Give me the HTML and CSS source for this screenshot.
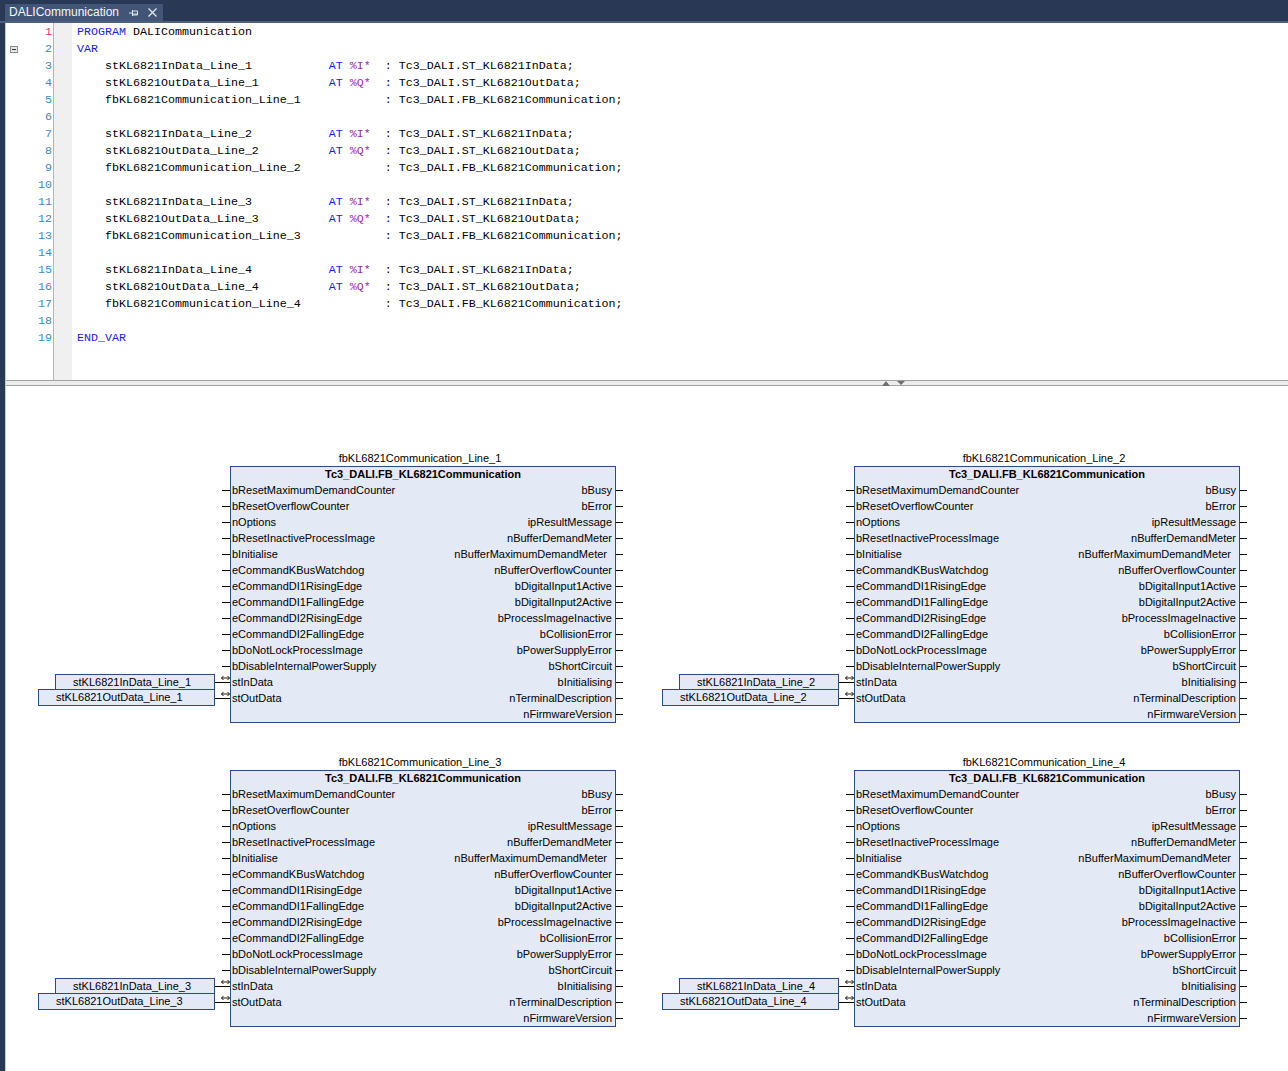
FILE: index.html
```html
<!DOCTYPE html>
<html>
<head>
<meta charset="utf-8">
<link rel="stylesheet" href="styles.css">
</head>
<body>
<div class="tabbar">
  <div class="tab">
    <span class="tabname">DALICommunication</span>
    <svg class="pin" width="9" height="8" viewBox="0 0 9 8"><path d="M0 4H3M3.5 1V7M3.5 2H8.5V6H3.5M3.5 5H8.5" fill="none" stroke="#dfe5ef" stroke-width="1"/></svg>
    <svg class="close" width="9" height="9" viewBox="0 0 9 9"><path d="M0.5 0.5L8.5 8.5M8.5 0.5L0.5 8.5" stroke="#dfe5ef" stroke-width="1.3"/></svg>
  </div>
</div>
<div class="tabline"></div>
<div class="main">
  <div class="editor">
    <div class="gutter">
      <div class="ln cur"><span class="fold"></span><span class="num">1</span></div>
      <div class="ln"><span class="fold"><span class="foldbox"></span></span><span class="num">2</span></div>
      <div class="ln"><span class="fold"></span><span class="num">3</span></div>
      <div class="ln"><span class="fold"></span><span class="num">4</span></div>
      <div class="ln"><span class="fold"></span><span class="num">5</span></div>
      <div class="ln"><span class="fold"></span><span class="num">6</span></div>
      <div class="ln"><span class="fold"></span><span class="num">7</span></div>
      <div class="ln"><span class="fold"></span><span class="num">8</span></div>
      <div class="ln"><span class="fold"></span><span class="num">9</span></div>
      <div class="ln"><span class="fold"></span><span class="num">10</span></div>
      <div class="ln"><span class="fold"></span><span class="num">11</span></div>
      <div class="ln"><span class="fold"></span><span class="num">12</span></div>
      <div class="ln"><span class="fold"></span><span class="num">13</span></div>
      <div class="ln"><span class="fold"></span><span class="num">14</span></div>
      <div class="ln"><span class="fold"></span><span class="num">15</span></div>
      <div class="ln"><span class="fold"></span><span class="num">16</span></div>
      <div class="ln"><span class="fold"></span><span class="num">17</span></div>
      <div class="ln"><span class="fold"></span><span class="num">18</span></div>
      <div class="ln"><span class="fold"></span><span class="num">19</span></div>
    </div>
    <div class="margin"></div>
    <div class="code">
      <div class="cl"><span class="kw">PROGRAM</span> DALICommunication</div>
      <div class="cl"><span class="kw">VAR</span></div>
      <div class="cl"><span>    stKL6821InData_Line_1           </span><span class="kw">AT</span> <span class="addr">%I*</span><span>  : Tc3_DALI.ST_KL6821InData;</span></div>
      <div class="cl"><span>    stKL6821OutData_Line_1          </span><span class="kw">AT</span> <span class="addr">%Q*</span><span>  : Tc3_DALI.ST_KL6821OutData;</span></div>
      <div class="cl">    fbKL6821Communication_Line_1            : Tc3_DALI.FB_KL6821Communication;</div>
      <div class="cl"> </div>
      <div class="cl"><span>    stKL6821InData_Line_2           </span><span class="kw">AT</span> <span class="addr">%I*</span><span>  : Tc3_DALI.ST_KL6821InData;</span></div>
      <div class="cl"><span>    stKL6821OutData_Line_2          </span><span class="kw">AT</span> <span class="addr">%Q*</span><span>  : Tc3_DALI.ST_KL6821OutData;</span></div>
      <div class="cl">    fbKL6821Communication_Line_2            : Tc3_DALI.FB_KL6821Communication;</div>
      <div class="cl"> </div>
      <div class="cl"><span>    stKL6821InData_Line_3           </span><span class="kw">AT</span> <span class="addr">%I*</span><span>  : Tc3_DALI.ST_KL6821InData;</span></div>
      <div class="cl"><span>    stKL6821OutData_Line_3          </span><span class="kw">AT</span> <span class="addr">%Q*</span><span>  : Tc3_DALI.ST_KL6821OutData;</span></div>
      <div class="cl">    fbKL6821Communication_Line_3            : Tc3_DALI.FB_KL6821Communication;</div>
      <div class="cl"> </div>
      <div class="cl"><span>    stKL6821InData_Line_4           </span><span class="kw">AT</span> <span class="addr">%I*</span><span>  : Tc3_DALI.ST_KL6821InData;</span></div>
      <div class="cl"><span>    stKL6821OutData_Line_4          </span><span class="kw">AT</span> <span class="addr">%Q*</span><span>  : Tc3_DALI.ST_KL6821OutData;</span></div>
      <div class="cl">    fbKL6821Communication_Line_4            : Tc3_DALI.FB_KL6821Communication;</div>
      <div class="cl"> </div>
      <div class="cl"><span class="kw">END_VAR</span></div>
    </div>
  </div>
  <div class="splitter"><span class="tri-up"></span><span class="tri-down"></span></div>
  <div class="fbd">

    <div class="net">
      <div class="ext">
        <div class="var vin">stKL6821InData_Line_1</div>
        <div class="var vout">stKL6821OutData_Line_1</div>
      </div>
      <div class="wires">
        <div class="pins-in"></div>
        <div class="link"><svg width="9" height="6" viewBox="0 0 9 6"><path d="M0.5 3H8.5M0.5 3L2.5 1M0.5 3L2.5 5M8.5 3L6.5 1M8.5 3L6.5 5" fill="none" stroke="#000" stroke-width="0.9"/></svg></div>
        <div class="link"><svg width="9" height="6" viewBox="0 0 9 6"><path d="M0.5 3H8.5M0.5 3L2.5 1M0.5 3L2.5 5M8.5 3L6.5 1M8.5 3L6.5 5" fill="none" stroke="#000" stroke-width="0.9"/></svg></div>
      </div>
      <div class="fb">
        <div class="inst">fbKL6821Communication_Line_1</div>
        <div class="box">
          <div class="title">Tc3_DALI.FB_KL6821Communication</div>
          <div class="row"><span>bResetMaximumDemandCounter</span><span>bBusy</span></div>
          <div class="row"><span>bResetOverflowCounter</span><span>bError</span></div>
          <div class="row"><span>nOptions</span><span>ipResultMessage</span></div>
          <div class="row"><span>bResetInactiveProcessImage</span><span>nBufferDemandMeter</span></div>
          <div class="row"><span>bInitialise</span><span class="gap">nBufferMaximumDemandMeter</span></div>
          <div class="row"><span>eCommandKBusWatchdog</span><span>nBufferOverflowCounter</span></div>
          <div class="row"><span>eCommandDI1RisingEdge</span><span>bDigitalInput1Active</span></div>
          <div class="row"><span>eCommandDI1FallingEdge</span><span>bDigitalInput2Active</span></div>
          <div class="row"><span>eCommandDI2RisingEdge</span><span>bProcessImageInactive</span></div>
          <div class="row"><span>eCommandDI2FallingEdge</span><span>bCollisionError</span></div>
          <div class="row"><span>bDoNotLockProcessImage</span><span>bPowerSupplyError</span></div>
          <div class="row"><span>bDisableInternalPowerSupply</span><span>bShortCircuit</span></div>
          <div class="row"><span>stInData</span><span>bInitialising</span></div>
          <div class="row"><span>stOutData</span><span>nTerminalDescription</span></div>
          <div class="row"><span></span><span>nFirmwareVersion</span></div>
        </div>
      </div>
      <div class="pins-out"></div>
    </div>

    <div class="net">
      <div class="ext">
        <div class="var vin">stKL6821InData_Line_2</div>
        <div class="var vout">stKL6821OutData_Line_2</div>
      </div>
      <div class="wires">
        <div class="pins-in"></div>
        <div class="link"><svg width="9" height="6" viewBox="0 0 9 6"><path d="M0.5 3H8.5M0.5 3L2.5 1M0.5 3L2.5 5M8.5 3L6.5 1M8.5 3L6.5 5" fill="none" stroke="#000" stroke-width="0.9"/></svg></div>
        <div class="link"><svg width="9" height="6" viewBox="0 0 9 6"><path d="M0.5 3H8.5M0.5 3L2.5 1M0.5 3L2.5 5M8.5 3L6.5 1M8.5 3L6.5 5" fill="none" stroke="#000" stroke-width="0.9"/></svg></div>
      </div>
      <div class="fb">
        <div class="inst">fbKL6821Communication_Line_2</div>
        <div class="box">
          <div class="title">Tc3_DALI.FB_KL6821Communication</div>
          <div class="row"><span>bResetMaximumDemandCounter</span><span>bBusy</span></div>
          <div class="row"><span>bResetOverflowCounter</span><span>bError</span></div>
          <div class="row"><span>nOptions</span><span>ipResultMessage</span></div>
          <div class="row"><span>bResetInactiveProcessImage</span><span>nBufferDemandMeter</span></div>
          <div class="row"><span>bInitialise</span><span class="gap">nBufferMaximumDemandMeter</span></div>
          <div class="row"><span>eCommandKBusWatchdog</span><span>nBufferOverflowCounter</span></div>
          <div class="row"><span>eCommandDI1RisingEdge</span><span>bDigitalInput1Active</span></div>
          <div class="row"><span>eCommandDI1FallingEdge</span><span>bDigitalInput2Active</span></div>
          <div class="row"><span>eCommandDI2RisingEdge</span><span>bProcessImageInactive</span></div>
          <div class="row"><span>eCommandDI2FallingEdge</span><span>bCollisionError</span></div>
          <div class="row"><span>bDoNotLockProcessImage</span><span>bPowerSupplyError</span></div>
          <div class="row"><span>bDisableInternalPowerSupply</span><span>bShortCircuit</span></div>
          <div class="row"><span>stInData</span><span>bInitialising</span></div>
          <div class="row"><span>stOutData</span><span>nTerminalDescription</span></div>
          <div class="row"><span></span><span>nFirmwareVersion</span></div>
        </div>
      </div>
      <div class="pins-out"></div>
    </div>

    <div class="net">
      <div class="ext">
        <div class="var vin">stKL6821InData_Line_3</div>
        <div class="var vout">stKL6821OutData_Line_3</div>
      </div>
      <div class="wires">
        <div class="pins-in"></div>
        <div class="link"><svg width="9" height="6" viewBox="0 0 9 6"><path d="M0.5 3H8.5M0.5 3L2.5 1M0.5 3L2.5 5M8.5 3L6.5 1M8.5 3L6.5 5" fill="none" stroke="#000" stroke-width="0.9"/></svg></div>
        <div class="link"><svg width="9" height="6" viewBox="0 0 9 6"><path d="M0.5 3H8.5M0.5 3L2.5 1M0.5 3L2.5 5M8.5 3L6.5 1M8.5 3L6.5 5" fill="none" stroke="#000" stroke-width="0.9"/></svg></div>
      </div>
      <div class="fb">
        <div class="inst">fbKL6821Communication_Line_3</div>
        <div class="box">
          <div class="title">Tc3_DALI.FB_KL6821Communication</div>
          <div class="row"><span>bResetMaximumDemandCounter</span><span>bBusy</span></div>
          <div class="row"><span>bResetOverflowCounter</span><span>bError</span></div>
          <div class="row"><span>nOptions</span><span>ipResultMessage</span></div>
          <div class="row"><span>bResetInactiveProcessImage</span><span>nBufferDemandMeter</span></div>
          <div class="row"><span>bInitialise</span><span class="gap">nBufferMaximumDemandMeter</span></div>
          <div class="row"><span>eCommandKBusWatchdog</span><span>nBufferOverflowCounter</span></div>
          <div class="row"><span>eCommandDI1RisingEdge</span><span>bDigitalInput1Active</span></div>
          <div class="row"><span>eCommandDI1FallingEdge</span><span>bDigitalInput2Active</span></div>
          <div class="row"><span>eCommandDI2RisingEdge</span><span>bProcessImageInactive</span></div>
          <div class="row"><span>eCommandDI2FallingEdge</span><span>bCollisionError</span></div>
          <div class="row"><span>bDoNotLockProcessImage</span><span>bPowerSupplyError</span></div>
          <div class="row"><span>bDisableInternalPowerSupply</span><span>bShortCircuit</span></div>
          <div class="row"><span>stInData</span><span>bInitialising</span></div>
          <div class="row"><span>stOutData</span><span>nTerminalDescription</span></div>
          <div class="row"><span></span><span>nFirmwareVersion</span></div>
        </div>
      </div>
      <div class="pins-out"></div>
    </div>

    <div class="net">
      <div class="ext">
        <div class="var vin">stKL6821InData_Line_4</div>
        <div class="var vout">stKL6821OutData_Line_4</div>
      </div>
      <div class="wires">
        <div class="pins-in"></div>
        <div class="link"><svg width="9" height="6" viewBox="0 0 9 6"><path d="M0.5 3H8.5M0.5 3L2.5 1M0.5 3L2.5 5M8.5 3L6.5 1M8.5 3L6.5 5" fill="none" stroke="#000" stroke-width="0.9"/></svg></div>
        <div class="link"><svg width="9" height="6" viewBox="0 0 9 6"><path d="M0.5 3H8.5M0.5 3L2.5 1M0.5 3L2.5 5M8.5 3L6.5 1M8.5 3L6.5 5" fill="none" stroke="#000" stroke-width="0.9"/></svg></div>
      </div>
      <div class="fb">
        <div class="inst">fbKL6821Communication_Line_4</div>
        <div class="box">
          <div class="title">Tc3_DALI.FB_KL6821Communication</div>
          <div class="row"><span>bResetMaximumDemandCounter</span><span>bBusy</span></div>
          <div class="row"><span>bResetOverflowCounter</span><span>bError</span></div>
          <div class="row"><span>nOptions</span><span>ipResultMessage</span></div>
          <div class="row"><span>bResetInactiveProcessImage</span><span>nBufferDemandMeter</span></div>
          <div class="row"><span>bInitialise</span><span class="gap">nBufferMaximumDemandMeter</span></div>
          <div class="row"><span>eCommandKBusWatchdog</span><span>nBufferOverflowCounter</span></div>
          <div class="row"><span>eCommandDI1RisingEdge</span><span>bDigitalInput1Active</span></div>
          <div class="row"><span>eCommandDI1FallingEdge</span><span>bDigitalInput2Active</span></div>
          <div class="row"><span>eCommandDI2RisingEdge</span><span>bProcessImageInactive</span></div>
          <div class="row"><span>eCommandDI2FallingEdge</span><span>bCollisionError</span></div>
          <div class="row"><span>bDoNotLockProcessImage</span><span>bPowerSupplyError</span></div>
          <div class="row"><span>bDisableInternalPowerSupply</span><span>bShortCircuit</span></div>
          <div class="row"><span>stInData</span><span>bInitialising</span></div>
          <div class="row"><span>stOutData</span><span>nTerminalDescription</span></div>
          <div class="row"><span></span><span>nFirmwareVersion</span></div>
        </div>
      </div>
      <div class="pins-out"></div>
    </div>

  </div>
</div>
</body>
</html>
```
FILE: styles.css
```css
html, body {
  margin: 0;
  padding: 0;
}
body {
  width: 1288px;
  height: 1071px;
  overflow: hidden;
  background: #293955;
  font-family: "Liberation Sans", Arial, sans-serif;
}

/* ---------- tab strip ---------- */
.tabbar {
  height: 21px;
  display: flex;
  align-items: flex-end;
  padding-left: 5px;
}
.tab {
  height: 17px;
  width: 158px;
  box-sizing: border-box;
  background: #435576;
  color: #f4f6fa;
  font-size: 12px;
  line-height: 17px;
  padding-left: 4px;
  display: flex;
  align-items: center;
}
.tabname {
  display: block;
}
.pin {
  display: block;
  margin-left: 10px;
}
.close {
  display: block;
  margin-left: 10px;
}
.tabline {
  height: 2px;
  background: #4d6082;
}

/* ---------- main document ---------- */
.main {
  margin-left: 5px;
  border-left: 1px solid #c3c9d4;
  background: #fff;
  height: 1048px;
  display: flex;
  flex-direction: column;
}

/* ---------- code editor ---------- */
.editor {
  height: 357px;
  display: flex;
  flex: none;
}
.gutter {
  width: 47px;
  padding-top: 1px;
  border-right: 1px solid #b4b4b4;
  font-family: "Liberation Mono", "Courier New", monospace;
  font-size: 11.67px;
}
.ln {
  height: 17px;
  line-height: 17px;
  display: flex;
  align-items: center;
}
.fold {
  width: 14px;
  padding-left: 4px;
  height: 17px;
  display: flex;
  align-items: center;
}
.foldbox {
  width: 6px;
  height: 5px;
  border: 1px solid #8c8c8c;
  background: linear-gradient(#333, #333) center / 4px 1px no-repeat, #e6e6e6;
}
.num {
  flex: 1;
  text-align: right;
  padding-right: 1px;
  color: #3f86c2;
}
.ln.cur .num {
  color: #d23a55;
}
.margin {
  width: 18px;
  background: #f0f0f0;
}
.code {
  padding: 1px 0 0 5px;
  font-family: "Liberation Mono", "Courier New", monospace;
  font-size: 11.67px;
  color: #000;
}
.cl {
  height: 17px;
  line-height: 17px;
  white-space: pre;
}
.kw {
  color: #1c1cd6;
}
.addr {
  color: #9a2aa6;
}

/* ---------- splitter ---------- */
.splitter {
  flex: none;
  height: 4px;
  border-top: 1px solid #a2a2a2;
  border-bottom: 1px solid #a2a2a2;
  background: #ececec;
  display: flex;
  align-items: flex-end;
  padding-left: 876px;
}
.tri-up {
  width: 0;
  height: 0;
  border-left: 4px solid transparent;
  border-right: 4px solid transparent;
  border-bottom: 5px solid #6e6e6e;
  margin-bottom: -1px;
}
.tri-down {
  width: 0;
  height: 0;
  border-left: 4px solid transparent;
  border-right: 4px solid transparent;
  border-top: 4px solid #6e6e6e;
  margin-left: 7px;
  align-self: flex-start;
}

/* ---------- FBD networks ---------- */
.fbd {
  flex: 1;
  padding: 64px 0 0 32px;
  display: grid;
  grid-template-columns: 585px 585px;
  grid-auto-rows: 273px;
  column-gap: 39px;
  row-gap: 31px;
  align-content: start;
  font-size: 11px;
  color: #000;
}
.net {
  display: flex;
  align-items: flex-start;
}
.ext {
  width: 177px;
  margin-top: 224px;
  display: flex;
  flex-direction: column;
  align-items: flex-end;
}
.var {
  box-sizing: border-box;
  border: 1px solid #2b4a7e;
  background: #e3e9f5;
  padding-left: 17px;
  line-height: 14px;
  white-space: nowrap;
}
.vin {
  width: 160px;
  height: 16px;
}
.vout {
  width: 177px;
  height: 17px;
  margin-top: -1px;
}
.wires {
  width: 15px;
  margin-top: 32px;
}
.pins-in {
  height: 192px;
  background: repeating-linear-gradient(to bottom, transparent 0 8px, #000 8px 9px, transparent 9px 16px) right top / 8px 100% no-repeat;
}
.link {
  height: 16px;
  background: linear-gradient(#000, #000) 0 8px / 100% 1px no-repeat;
}
.link svg {
  display: block;
  margin-left: 6px;
  padding-top: 1px;
}
.fb {
  width: 386px;
}
.inst {
  height: 16px;
  line-height: 16px;
  text-align: center;
  white-space: nowrap;
  padding-right: 6px;
}
.box {
  box-sizing: border-box;
  border: 1px solid #2b4a7e;
  background: #e3e9f5;
}
.title {
  height: 15px;
  line-height: 15px;
  text-align: center;
  font-weight: bold;
  white-space: nowrap;
}
.row {
  height: 16px;
  line-height: 16px;
  display: flex;
  justify-content: space-between;
  padding: 0 3px 0 1px;
  white-space: nowrap;
}
.row .gap {
  padding-right: 5px;
}
.pins-out {
  width: 7px;
  height: 240px;
  margin-top: 32px;
  background: repeating-linear-gradient(to bottom, transparent 0 8px, #000 8px 9px, transparent 9px 16px);
}
```
